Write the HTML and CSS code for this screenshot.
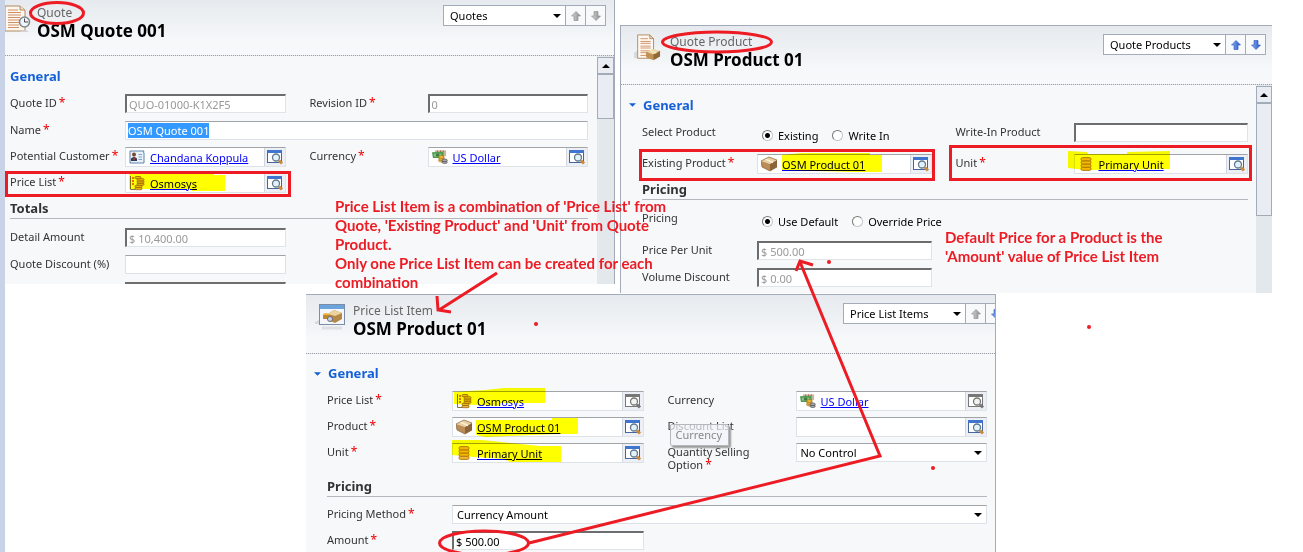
FILE: index.html
```html
<!DOCTYPE html>
<html lang="en">
<head>
<meta charset="utf-8">
<title>Price List Item</title>
<link rel="stylesheet" href="styles.css">
</head>
<body>
<svg class="defs" aria-hidden="true">
  <defs>
    <linearGradient id="gBlue" x1="0" x2="1"><stop offset="0" stop-color="#8fb4f5"/><stop offset="1" stop-color="#1f50c8"/></linearGradient>
    <linearGradient id="gGray" x1="0" x2="1"><stop offset="0" stop-color="#d8d8d8"/><stop offset="1" stop-color="#8a8a8a"/></linearGradient>
    <symbol id="find" viewBox="0 0 18 16">
      <rect x="1.5" y="1.5" width="14" height="12" fill="#fff" stroke="#48649c"/>
      <rect x="1" y="1" width="15" height="3" fill="#3f74cf"/>
      <circle cx="10" cy="8.500" r="3.500" fill="#e3f1fa" stroke="#60788c" stroke-width="1.300"/>
      <path d="M13 11.500l3 3" stroke="#c98a3c" stroke-width="3"/>
    </symbol>
    <symbol id="findGray" viewBox="0 0 18 16">
      <rect x="1.500" y="1.500" width="14" height="12" fill="#fff" stroke="#777"/>
      <rect x="1" y="1" width="15" height="3" fill="#777"/>
      <circle cx="10" cy="8.500" r="3.500" fill="#f3f3f3" stroke="#777" stroke-width="1.300"/>
      <path d="M13 11.500l3 3" stroke="#777" stroke-width="3"/>
    </symbol>
    <symbol id="contact" viewBox="0 0 16 16">
      <path d="M1 2h14l-.5 1 .5 1v10H1z" fill="#e9f1fa" stroke="#5d82ad"/>
      <circle cx="5" cy="5.500" r="2" fill="#7c4a2b"/><path d="M2 12V9.500l3-2 3 2V12z" fill="#333c4c"/><path d="M4.500 8h1v3h-1z" fill="#e33"/>
      <path d="M9.500 5.500H13M9.500 8H13M9.500 10.500H13" stroke="#7ea1c8"/>
    </symbol>
    <symbol id="plist" viewBox="0 0 16 16">
      <path d="M1.500 1v13.500h5" fill="none" stroke="#7d7350"/>
      <path d="M3 3h2M3 6h2M3 9h2" stroke="#e04020" stroke-width="1.300"/>
      <g fill="#edb83c" stroke="#936815" stroke-width=".8"><rect x="6" y="12.500" width="7" height="2.200" rx="1"/><rect x="6" y="10.300" width="7" height="2.200" rx="1"/><rect x="8" y="8.100" width="7" height="2.200" rx="1"/><rect x="8" y="5.900" width="7" height="2.200" rx="1"/><rect x="8" y="3.700" width="7" height="2.200" rx="1"/><rect x="6" y="1.500" width="6" height="2.200" rx="1"/></g>
    </symbol>
    <symbol id="money" viewBox="0 0 17 16">
      <path d="M3 1h12v6H3z" fill="#c9b79c"/><path d="M6 1v2M9 1v2M12 1v2" stroke="#a35f48"/>
      <path d="M0 3l12-.5L13 9H1z" fill="#4e9a50"/><path d="M2 4.500h8v3H2z" fill="#8cc68a"/><ellipse cx="6" cy="6" rx="2" ry="1.600" fill="#3a7c40"/>
      <g stroke="#9c6a14" stroke-width=".7" fill="#f1bb38"><ellipse cx="10" cy="11.800" rx="3" ry="1.500"/><ellipse cx="10" cy="10" rx="3" ry="1.500"/><ellipse cx="10" cy="8" rx="3" ry="1.500"/></g>
      <g stroke="#444" stroke-width=".7" fill="#a9a9b0"><ellipse cx="13.500" cy="13.500" rx="2.800" ry="1.400"/><ellipse cx="13.500" cy="11.500" rx="2.800" ry="1.400"/></g>
    </symbol>
    <symbol id="box" viewBox="0 0 16 16">
      <path d="M0 5l8-4 8 3-7 4z" fill="#e9cf9f"/><path d="M0 5l9 3v7l-8-4z" fill="#b98c58"/><path d="M9 8l7-4v7l-7 4z" fill="#8d6338"/>
      <path d="M4 3l8 3.500" stroke="#fbf0d6" stroke-width="1.500"/><path d="M0 5l8-4 8 3v7l-7 4-8-4z" fill="none" stroke="#866038" stroke-width=".7"/>
    </symbol>
    <symbol id="coins" viewBox="0 0 16 16">
      <g fill="#f5b730" stroke="#a87412" stroke-width=".9"><rect x="3" y="11.200" width="10" height="3.200" rx="1.500"/><rect x="3" y="8" width="10" height="3.200" rx="1.500"/><rect x="3" y="4.800" width="10" height="3.200" rx="1.500"/><rect x="3" y="1.600" width="10" height="3.200" rx="1.500"/></g>
    </symbol>
    <symbol id="doc" viewBox="0 0 24 28">
      <path d="M0 20l5-3v9H0z" fill="#d9d9dc"/>
      <path d="M4 1h13l4 4v21H4z" fill="#fdf7ef" stroke="#b08a62"/><path d="M17 1v4h4z" fill="#f0dfc5" stroke="#b08a62"/>
      <path d="M7 5h8M7 8h11M7 10h11M7 13h11M7 15h11M7 18h11M7 20h9M7 23h8" stroke="#d09066"/>
    </symbol>
    <symbol id="up" viewBox="0 0 10 10"><path d="M5 .5L9.500 5H7v4.500H3V5H.5z" fill="url(#gBlue)" stroke="#2a55b8" stroke-width=".6"/></symbol>
    <symbol id="down" viewBox="0 0 10 10"><path d="M5 9.500L.5 5H3V.5h4V5h2.500z" fill="url(#gBlue)" stroke="#2a55b8" stroke-width=".6"/></symbol>
    <symbol id="upGray" viewBox="0 0 10 10"><path d="M5 .5L9.500 5H7v4.500H3V5H.5z" fill="url(#gGray)" stroke="#888" stroke-width=".6"/></symbol>
    <symbol id="downGray" viewBox="0 0 10 10"><path d="M5 9.500L.5 5H3V.5h4V5h2.500z" fill="url(#gGray)" stroke="#888" stroke-width=".6"/></symbol>
    <symbol id="caret" viewBox="0 0 8 4"><path d="M0 0h8L4 4z"/></symbol>
    <symbol id="caretUp" viewBox="0 0 8 4"><path d="M0 4h8L4 0z"/></symbol>
  </defs>
</svg>

<main class="desktop">
  <section class="window win-quote">
    <header class="head">
      <svg class="head-icon" viewBox="0 0 24 28">
        <path d="M-3 1h15l5 4v21H-3z" fill="#fdf7ef" stroke="#b08a62"/><path d="M12 1v4h5" fill="#f0dfc5" stroke="#b08a62"/>
        <path d="M0 5h10M0 7.500h13M0 10h13M0 12.500h12M0 15h11M0 17.500h11M0 20h11M0 22.500h11" stroke="#d09066"/>
        <path d="M12 27a5 3 0 0 1 9 0z" fill="#d3d5d9"/><circle cx="16.500" cy="17" r="5" fill="#eef5fb" stroke="#83878c" stroke-width="1.600"/><path d="M16.500 13.500V17H20" fill="none" stroke="#444"/>
      </svg>
      <div class="titles"><p class="kind">Quote</p><h1 class="name">OSM Quote 001</h1></div>
      <div class="nav">
        <span class="pick"><select aria-label="Quotes view"><option>Quotes</option></select><svg class="caret"><use href="#caret"/></svg></span>
        <button aria-label="Previous"><svg><use href="#upGray"/></svg></button><button aria-label="Next"><svg><use href="#downGray"/></svg></button>
      </div>
    </header>
    <div class="body">
      <form class="form">
        <h2 class="group">General</h2>
        <div class="row tall">
          <label for="qid">Quote ID<i>*</i></label><input id="qid" class="box" value="QUO-01000-K1X2F5" disabled>
          <label class="second" for="rev">Revision ID<i>*</i></label><input id="rev" class="box" value="0" disabled>
        </div>
        <div class="row">
          <label for="qname">Name<i>*</i></label><input id="qname" class="box light wide" value="OSM Quote 001">
        </div>
        <div class="row">
          <span class="label">Potential Customer<i>*</i></span>
          <div class="lookup"><svg><use href="#contact"/></svg><a href="#">Chandana Koppula</a><button type="button" aria-label="Look up customer"><svg><use href="#find"/></svg></button></div>
          <span class="label second">Currency<i>*</i></span>
          <div class="lookup"><svg><use href="#money"/></svg><a href="#">US Dollar</a><button type="button" aria-label="Look up currency"><svg><use href="#find"/></svg></button></div>
        </div>
        <div class="row">
          <span class="label">Price List<i>*</i></span>
          <div class="lookup"><svg><use href="#plist"/></svg><a href="#">Osmosys</a><button type="button" aria-label="Look up price list"><svg><use href="#find"/></svg></button></div>
        </div>
        <h3 class="subgroup">Totals</h3>
        <div class="row tall"><label for="detail">Detail Amount</label><input id="detail" class="box" value="$ 10,400.00" disabled></div>
        <div class="row tall"><label for="disc">Quote Discount (%)</label><input id="disc" class="box light"></div>
        <div class="row tall"><span></span><input class="box" aria-label="Discount amount" disabled></div>
      </form>
      <div class="scroll"><button aria-label="Scroll up"><svg><use href="#caretUp"/></svg></button><div class="thumb"></div></div>
    </div>
  </section>

  <section class="window win-product">
    <header class="head">
      <svg class="head-icon" viewBox="0 0 28 30">
        <use href="#doc" width="24" height="28"/>
        <path d="M13 19l7-3 8 2-7 4z" fill="#ecd6a6"/><path d="M13 19l8 3v6l-8-3z" fill="#bf9152"/><path d="M21 22l7-4v6l-7 4z" fill="#8f6834"/><path d="M17 17.500l7 3" stroke="#fff3d2"/>
      </svg>
      <div class="titles"><p class="kind">Quote Product</p><h1 class="name">OSM Product 01</h1></div>
      <div class="nav">
        <span class="pick"><select aria-label="Quote products view"><option>Quote Products</option></select><svg class="caret"><use href="#caret"/></svg></span>
        <button aria-label="Previous"><svg><use href="#up"/></svg></button><button aria-label="Next"><svg><use href="#down"/></svg></button>
      </div>
    </header>
    <div class="body">
      <form class="form">
        <h2 class="group"><svg class="twist"><use href="#caret"/></svg>General</h2>
        <div class="row choice">
          <span class="label">Select Product</span>
          <div class="radios"><label><input type="radio" name="sel" checked>Existing</label><label><input type="radio" name="sel">Write In</label></div>
          <label class="second" for="writein">Write-In Product</label><input id="writein" class="box">
        </div>
        <div class="row">
          <span class="label">Existing Product<i>*</i></span>
          <div class="lookup"><svg><use href="#box"/></svg><a href="#">OSM Product 01</a><button type="button" aria-label="Look up product"><svg><use href="#find"/></svg></button></div>
          <span class="label second">Unit<i>*</i></span>
          <div class="lookup"><svg><use href="#coins"/></svg><a href="#">Primary Unit</a><button type="button" aria-label="Look up unit"><svg><use href="#find"/></svg></button></div>
        </div>
        <h3 class="subgroup">Pricing</h3>
        <div class="row choice">
          <span class="label">Pricing</span>
          <div class="radios"><label><input type="radio" name="price" checked>Use Default</label><label><input type="radio" name="price">Override Price</label></div>
        </div>
        <div class="row tall"><label for="ppu">Price Per Unit</label><input id="ppu" class="box" value="$ 500.00" disabled></div>
        <div class="row tall"><label for="vol">Volume Discount</label><input id="vol" class="box" value="$ 0.00" disabled></div>
      </form>
      <div class="scroll"><button aria-label="Scroll up"><svg><use href="#caretUp"/></svg></button><div class="thumb"></div></div>
    </div>
  </section>

  <section class="window win-item">
    <header class="head">
      <svg class="head-icon" viewBox="0 0 30 28">
        <path d="M0 19l6-3v5H0z" fill="#d9d9dc"/>
        <rect x="4.500" y="1.500" width="25" height="20" fill="#f3f6fa" stroke="#7c8ca4"/><rect x="5" y="2" width="24" height="4" fill="#6ba3dc"/>
        <path d="M13 11l6-4 8 3v6l-7 4-7-3z" fill="#b48847"/><path d="M13 11l6-4 8 3-7 3z" fill="#ecd29c"/>
        <ellipse cx="11" cy="12" rx="3" ry="2" fill="#efb43b"/><path d="M8 12h6v4H8z" fill="#c2892a"/><circle cx="15" cy="16" r="2.500" fill="#cbd3e4" stroke="#667"/>
        <path d="M7 25h20" stroke="#dedfe2" stroke-width="3"/>
      </svg>
      <div class="titles"><p class="kind">Price List Item</p><h1 class="name">OSM Product 01</h1></div>
      <div class="nav">
        <span class="pick"><select aria-label="Price list items view"><option>Price List Items</option></select><svg class="caret"><use href="#caret"/></svg></span>
        <button aria-label="Previous"><svg><use href="#upGray"/></svg></button><button aria-label="Next"><svg><use href="#down"/></svg></button>
      </div>
    </header>
    <div class="body">
      <form class="form">
        <h2 class="group"><svg class="twist"><use href="#caret"/></svg>General</h2>
        <div class="row">
          <span class="label">Price List<i>*</i></span>
          <div class="lookup"><svg><use href="#plist"/></svg><a href="#">Osmosys</a><button type="button" aria-label="Look up price list"><svg><use href="#findGray"/></svg></button></div>
          <span class="label second">Currency</span>
          <div class="lookup"><svg><use href="#money"/></svg><a href="#">US Dollar</a><button type="button" aria-label="Look up currency"><svg><use href="#findGray"/></svg></button></div>
        </div>
        <div class="row">
          <span class="label">Product<i>*</i></span>
          <div class="lookup"><svg><use href="#box"/></svg><a href="#">OSM Product 01</a><button type="button" aria-label="Look up product"><svg><use href="#find"/></svg></button></div>
          <span class="label second tipped">Discount List<span class="tip" role="tooltip">Currency</span></span>
          <div class="lookup"><span></span><span></span><button type="button" aria-label="Look up discount list"><svg><use href="#find"/></svg></button></div>
        </div>
        <div class="row double">
          <span class="label">Unit<i>*</i></span>
          <div class="lookup"><svg><use href="#coins"/></svg><a href="#">Primary Unit</a><button type="button" aria-label="Look up unit"><svg><use href="#find"/></svg></button></div>
          <label class="second" for="qso">Quantity Selling Option<i>*</i></label>
          <span class="pick"><select id="qso"><option>No Control</option></select><svg class="caret"><use href="#caret"/></svg></span>
        </div>
        <h3 class="subgroup">Pricing</h3>
        <div class="row">
          <label for="method">Pricing Method<i>*</i></label>
          <span class="pick wide"><select id="method"><option>Currency Amount</option></select><svg class="caret"><use href="#caret"/></svg></span>
        </div>
        <div class="row"><label for="amount">Amount<i>*</i></label><input id="amount" class="box" value="$ 500.00"></div>
      </form>
    </div>
  </section>

  <svg class="marker" viewBox="0 0 1303 552" aria-hidden="true">
    <path d="M129 174H214V175H225V191H192V189H129z"/>
    <path d="M782 155L802 153H870V155H882V172H855L782 170z"/>
    <path d="M1068 151L1087 152L1088 154H1127V152L1170 151V169L1085 170L1068 168z"/>
    <path d="M454 392L485 390L504 388H545V403H500V406L454 404z"/>
    <path d="M476 420H552V418H578V434H558L485 437L476 435z"/>
    <path d="M452 440H482L540 446H561V462H510L504 459L474 457L452 455z"/>
  </svg>
  <svg class="pen" viewBox="0 0 1303 552" aria-hidden="true">
    <rect x="6.500" y="172.500" width="283" height="23"/>
    <rect x="640.500" y="150.500" width="293" height="29"/>
    <rect x="950.500" y="146.500" width="300" height="33"/>
    <ellipse cx="57" cy="13" rx="26.500" ry="10.500"/>
    <ellipse cx="717" cy="42" rx="54.500" ry="10"/>
    <ellipse cx="484" cy="543" rx="44.500" ry="12"/>
    <path d="M497 273L439 310M437 296L438 310L451 312"/>
    <path d="M529 543L880 456L800 262M796 271L800 261L813 265"/>
    <g class="dots"><circle cx="536" cy="324" r="2"/><circle cx="829" cy="262" r="2"/><circle cx="1089" cy="327" r="2"/><circle cx="933" cy="468" r="2"/></g>
  </svg>
  <p class="note note-combo">Price List Item is a combination of 'Price List' from<br>Quote, 'Existing Product' and 'Unit' from Quote<br>Product.<br>Only one Price List Item can be created for each<br>combination</p>
  <p class="note note-default">Default Price for a Product is the<br>'Amount' value of Price List Item</p>
</main>
<script src="main.js"></script>
</body>
</html>
```
FILE: styles.css
```css
* { box-sizing: border-box; }
body { margin: 0; background: #fff; color: #333; font: 11px/13px "Noto Sans", "Open Sans", sans-serif; }
h1, h2, h3, p { margin: 0; }
input, select, button { font: inherit; color: #000; margin: 0; padding: 0; border-radius: 0; }
button { display: grid; place-items: center; }
.defs { position: absolute; width: 0; height: 0; }

.desktop { position: relative; height: 100vh; min-height: 552px; overflow: hidden; border-left: 5px solid #c9d3e8; }
.window { position: absolute; display: flex; flex-direction: column; overflow: hidden; background: #f6f8fa; --label: 115px; --label2: 118px; }
.win-quote { left: 0; top: 0; width: 610px; height: 284px; border-right: 1px solid #a3abb8; }
.win-product { left: 615px; top: 25px; width: 652px; height: 268px; border: solid #a3abb8; border-width: 1px 0 0 1px; }
.win-item { left: 301px; top: 294px; width: 690px; height: 258px; border: solid #a3abb8; border-width: 1px 1px 0 0; --label: 125px; --label2: 128px; }

.head { display: flex; align-items: flex-start; flex: none; height: 59px; padding: 8px 6px 0 11px; border-bottom: 1px dotted #9a9fa6; background: linear-gradient(#e6eaee, #f6f8fa 75%); }
.win-quote .head { height: 56px; padding: 5px 8px 0 0; }
.win-item .head { padding: 8px 0 0 9px; }
.head-icon { width: 30px; height: 28px; flex: none; }
.titles { flex: 1; padding-left: 8px; white-space: nowrap; }
.win-quote .titles { padding-left: 2px; }
.kind { color: #666; font-size: 12px; line-height: 16px; }
.name { color: #000; font-size: 17px; line-height: 20px; font-weight: 700; }
.nav { display: grid; grid-template-columns: 121px 20px 20px; height: 21px; border: 1px solid #a3abb8; background: #fff; flex: none; }
.win-item .nav { margin-right: -11px; }
.nav button { border: 0; border-left: 1px solid #a3abb8; background: #f8f9fb; }
.nav button svg { width: 10px; height: 10px; }

.pick { display: grid; align-items: center; height: 19px; border: 1px solid #dde1e8; border-top-color: #a0a3a8; background: #fff; }
.pick select { grid-area: 1 / 1; width: 100%; height: 100%; padding-left: 4px; border: 0; background: none; appearance: none; font-size: 11px; }
.pick .caret { grid-area: 1 / 1; justify-self: end; width: 8px; height: 4px; margin-right: 4px; pointer-events: none; }
.nav .pick { height: 100%; border: 0; }
.nav .pick select { padding-left: 6px; }

.body { display: flex; flex: 1; min-height: 0; }
.form { flex: 1; padding: 0 8px 0 21px; }
.win-quote .form { padding: 0 9px 0 5px; }
.group { display: flex; align-items: center; height: 38px; padding-top: 2px; color: #1560d8; font-size: 13px; font-weight: 700; }
.win-item .group { height: 37px; }
.twist { width: 7px; height: 4px; fill: #1560d8; margin: 0 7px 0 -13px; }
.subgroup { height: 20px; margin-bottom: 9px; border-bottom: 1px solid #b4b8be; color: #333; font-size: 13px; line-height: 18px; }
.win-item .subgroup { margin-bottom: 8px; }
.row { display: grid; grid-template-columns: var(--label) 1fr 24px var(--label2) 1fr; align-items: start; height: 26px; }
.row.tall { height: 27px; }
.row.choice { height: 31px; }
.subgroup + .row.choice { height: 32px; }
.row.double { height: 34px; }
.row > label, .label { padding-top: 2px; }
.second { grid-column: 4; }
.wide { grid-column: 2 / 6; }
i { color: #e00; font-style: normal; font-size: 12px; line-height: 10px; margin-left: 2px; }

.box { width: 100%; height: 19px; padding: 0 2px; border: 1px solid #e0e3e8; border-top: 2px solid #6d6d6d; border-left: 2px solid #6d6d6d; background: #fff; outline: 0; }
.box.light { border: 1px solid #dde1e8; border-top-color: #a0a3a8; }
.box:disabled { color: #999; }
.box::selection { background: #39f; color: #fff; }

.lookup { display: grid; grid-template-columns: 16px 1fr 21px; column-gap: 5px; align-items: center; height: 20px; padding-left: 3px; border: 1px solid #dde1e8; border-top-color: #a0a3a8; background: #fff; }
.lookup > svg { width: 16px; height: 16px; }
.lookup a { color: #00f; white-space: nowrap; justify-self: start; padding-top: 1px; }
.lookup button { height: 18px; border: 0; border-left: 1px solid #d0d5de; background: #eceff5; }
.lookup button svg { width: 18px; height: 16px; }

.radios { display: flex; gap: 14px; padding: 6px 0 0 5px; color: #000; }
.radios label { display: flex; align-items: center; gap: 5px; white-space: nowrap; }
.radios input { appearance: none; width: 11px; height: 11px; border: 1px solid #c4c7cb; border-top-color: #777; border-left-color: #777; border-radius: 50%; background: #fff; }
.radios input:checked { background: radial-gradient(circle, #000 2px, #fff 3px); }

.scroll { width: 17px; padding-top: 1px; background: #e3e8ec; flex: none; }
.win-product .scroll { width: 16px; }
.scroll button { width: 100%; height: 17px; border: 1px solid #a3abb8; background: #e9ecf2; }
.scroll svg { width: 8px; height: 4px; }
.thumb { height: 45px; border: 1px solid #a3abb8; background: #e9ecf2; }
.win-product .thumb { height: 113px; }

.tipped { position: relative; }
.tip { position: absolute; left: 2px; top: 7px; padding: 3px 6px 3px 5px; border: 1px solid #b5b7bd; border-radius: 2px; background: rgba(243, 244, 249, .7); box-shadow: 2px 2px 2px #999; color: #888; font-size: 11px; line-height: 14px; }

.marker, .pen { position: absolute; left: -5px; top: 0; width: 1303px; height: 552px; pointer-events: none; }
.marker { mix-blend-mode: multiply; fill: #ff0; }
.pen { fill: none; stroke: #ed1c24; stroke-width: 3; }
.dots { fill: #ed1c24; stroke: none; }
.note { position: absolute; color: #ed1c24; font: 700 15px/19px Lato, sans-serif; white-space: nowrap; }
.note-combo { left: 330px; top: 197px; }
.note-default { left: 940px; top: 228px; }
```
FILE: main.js
```js
const nameBox = document.getElementById("qname");
nameBox.focus();
nameBox.select();
```
